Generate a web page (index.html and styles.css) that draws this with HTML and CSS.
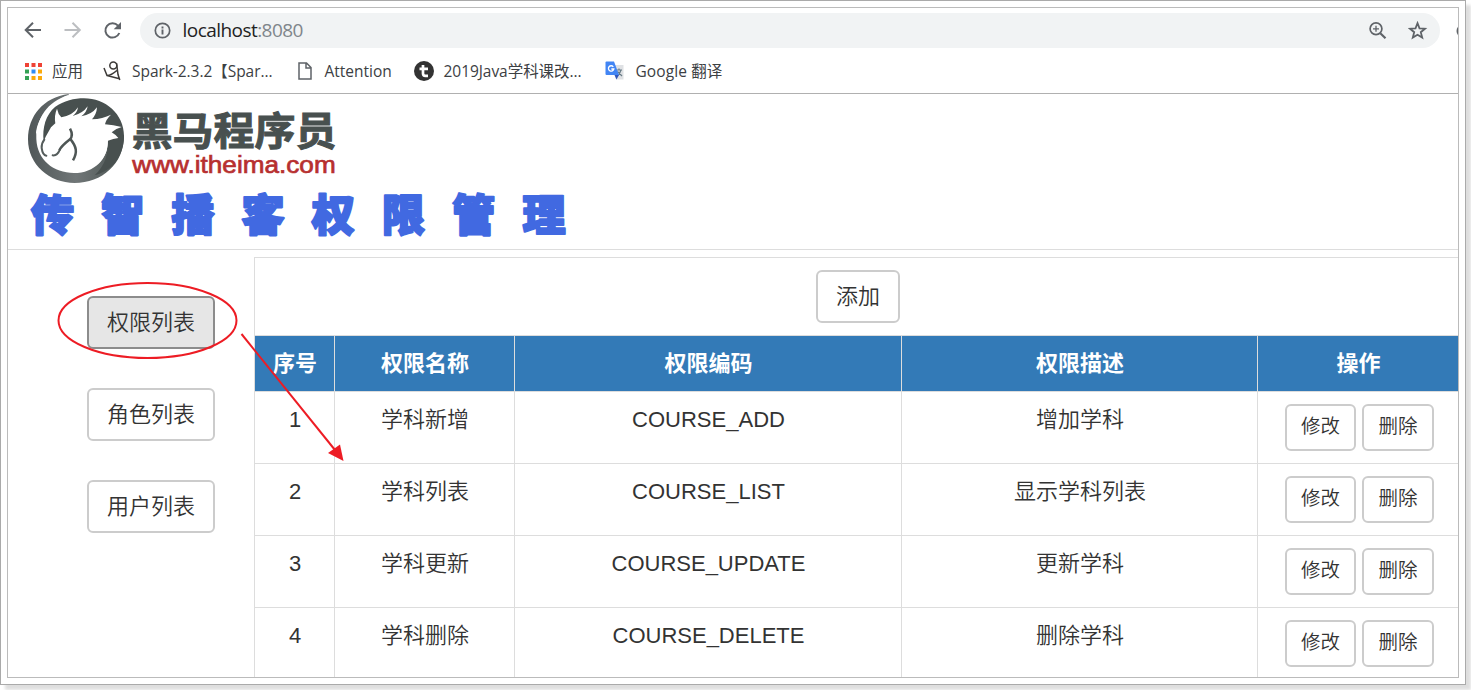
FILE: index.html
```html
<!DOCTYPE html>
<html lang="zh-CN">
<head>
<meta charset="utf-8">
<title>权限管理</title>
<link rel="stylesheet" href="styles.css">
</head>
<body>
<div class="frame">
<div class="browser">
  <div class="toolbar">
    <svg class="nav-icons" width="125" height="36" viewBox="8 13 125 36" fill="none" stroke="#5f6368" stroke-width="2">
      <path d="M41 30H26M33 22.7L25.7 30L33 37.3"/>
      <path stroke="#bcbec1" d="M64.500 30H79.500M72.500 22.700L79.800 30L72.500 37.300"/>
      <path d="M118 25.600A7.200 7.200 0 1 0 119.300 33"/>
      <path fill="#5f6368" stroke="none" d="M121 22V29.300H113.700Z"/>
    </svg>
    <div class="address">
      <svg width="18" height="18" viewBox="0 0 18 18"><circle cx="8.500" cy="8.500" r="7.200" fill="none" stroke="#5f6368" stroke-width="1.700"/><path d="M8.500 7.500v5M8.500 4.500v1.900" stroke="#5f6368" stroke-width="1.900"/></svg>
      <span class="url">localhost<span class="port">:8080</span></span>
      <svg class="zoom-icon" width="20" height="20" viewBox="0 0 20 20" fill="none" stroke="#5f6368" stroke-width="1.700"><circle cx="8" cy="7.800" r="5.900"/><path d="M12.300 12.200L17.500 17.300" stroke-width="2.200"/><path d="M5 7.800h6M8 4.800v6" stroke-width="1.300"/></svg>
      <svg width="20" height="20" viewBox="0 0 20 20" fill="none" stroke="#5f6368" stroke-width="1.800"><path d="M9.500 2.200L11.500 7.300L17 7.700L12.800 11.200L14.200 16.600L9.500 13.700L4.800 16.600L6.200 11.200L2 7.700L7.500 7.300Z"/></svg>
    </div>
    <svg class="edge-icon" width="2" height="12" viewBox="0 0 2 12"><circle cx="7" cy="6" r="6.500" fill="#5f6368"/></svg>
  </div>
  <div class="bookmarks">
    <svg class="apps" width="17" height="17" viewBox="0 0 17 17"><path fill="#ef4335" d="M0 0h4v4H0zM6.500 0h4v4h-4zM13 0h4v4h-4z"/><path fill="#34a155" d="M0 6.500h4v4H0zM0 13h4v4H0z"/><path fill="#2f8df5" d="M6.500 6.500h4v4h-4z"/><path fill="#fbaa0b" d="M13 6.500h4v4h-4zM6.500 13h4v4h-4zM13 13h4v4h-4z"/></svg>
    <span class="bm bm-apps">应用</span>
    <svg class="spark" width="18" height="20" viewBox="0 0 18 20" fill="none" stroke="#3d3a38" stroke-width="1.500"><circle cx="10.300" cy="4.500" r="3.500"/><path d="M13.500 2L15 13.500L16.800 19M1 7L4 14.500C8 14.500 11 12 13.800 9.500M4 14.500L16.500 17.800"/></svg>
    <span class="bm bm-spark">Spark-2.3.2【Spar...</span>
    <svg class="file" width="14" height="18" viewBox="0 0 14 18" fill="none" stroke="#5f6368" stroke-width="1.500"><path d="M1 1H8.500L13 5.500V17H1ZM8 1V6H13"/></svg>
    <span class="bm bm-att">Attention</span>
    <svg class="tee" width="20" height="20" viewBox="0 0 20 20"><circle cx="10" cy="10" r="10" fill="#333"/><path d="M9 4v8.500Q9 14.800 11.300 14.800H14M5.500 7.800H14" fill="none" stroke="#fff" stroke-width="2.700"/></svg>
    <span class="bm bm-java">2019Java学科课改...</span>
    <svg class="translate" width="20" height="20" viewBox="0 0 20 20"><path fill="#dfe1e4" d="M8 4H18.500V18.500H11Z"/><path d="M11 9h6M14 7.500V9M12 15Q15 13 16 9M12.500 10.500L17 15" fill="none" stroke="#687b86" stroke-width="1.200"/><path fill="#4285f4" d="M1.500 .5H9L14 14H1.500Q.5 14 .5 13V1.500Q.5 .5 1.500 .5Z"/><path fill="#3056bb" d="M9.500 14H14L11.500 18.500Z"/><path d="M8.300 5.800A2.700 2.700 0 1 0 8.800 8H6.300" fill="none" stroke="#fff" stroke-width="1.300"/></svg>
    <span class="bm bm-google">Google 翻译</span>
  </div>
  <header class="header">
    <svg class="logo" width="320" height="92" viewBox="0 6 960 276">
      <defs>
        <linearGradient id="ring" x1="0" y1="0" x2="1" y2="0"><stop offset="0" stop-color="#505758"/><stop offset=".5" stop-color="#707677"/><stop offset="1" stop-color="#4b5452"/></linearGradient>
      </defs>
      <path fill="url(#ring)" d="M134 6C58 16 12 72 12 142C12 218 76 273 152 273C234 273 300 215 300 132L250 60L60 60L36 130C36 90 66 36 134 9Z"/>
      <path fill="#fff" d="M134 9C70 28 36 80 37 142C40 204 88 243 150 243C212 243 252 200 252 146L200 80L80 100L62 120C62 90 76 60 104 36Z"/>
      <path fill="#48504f" d="M180 19C244 19 300 66 300 132C300 165 288 195 270 216C250 236 232 244 212 250C244 220 256 180 250 140L59 149C54 106 66 68 93 45C120 26 151 19 180 19Z"/>
      <path fill="#fff" d="M56 156L65 134L81 106L94 94Q90 70 99 50Q102 66 112 76Q147 70 162 46Q160 62 146 72Q176 65 191 43Q188 62 172 73Q203 68 219 46Q218 66 204 82Q236 80 261 68Q246 82 243 97Q268 99 293 105Q274 110 263 121Q275 128 283 138Q268 140 252 146Q250 212 190 232L110 225L60 188Z"/>
      <path fill="none" stroke="#555d5c" stroke-width="6" stroke-linecap="round" d="M61 143Q52 154 53 168Q56 190 67 191M86 190Q100 192 108 172"/>
      <path fill="none" stroke="#4e5655" stroke-width="7.500" stroke-linejoin="round" d="M106 175Q112 162 138 142Q149 130 138 110M138 140C158 164 161 181 147 205"/>
      <text x="323" y="160" textLength="614" lengthAdjust="spacingAndGlyphs" class="logo-cn">黑马程序员</text>
      <text x="325" y="244" textLength="610" lengthAdjust="spacingAndGlyphs" class="logo-url">www.itheima.com</text>
    </svg>
    <h1 class="title"><svg width="560" height="60" viewBox="0 0 560 60"><text x="0" y="45">传智播客权限管理</text></svg></h1>
  </header>
  <div class="content">
    <nav class="side">
      <button class="btn active">权限列表</button>
      <button class="btn">角色列表</button>
      <button class="btn">用户列表</button>
    </nav>
    <main class="main">
      <div class="add-bar"><button class="btn add">添加</button></div>
      <table class="grid">
        <colgroup><col class="c1"><col class="c2"><col class="c3"><col class="c4"><col class="c5"></colgroup>
        <thead><tr><th>序号</th><th>权限名称</th><th>权限编码</th><th>权限描述</th><th>操作</th></tr></thead>
        <tbody>
          <tr><td>1</td><td>学科新增</td><td>COURSE_ADD</td><td>增加学科</td><td><div class="ops"><button class="btn sm">修改</button><button class="btn sm del">删除</button></div></td></tr>
          <tr><td>2</td><td>学科列表</td><td>COURSE_LIST</td><td>显示学科列表</td><td><div class="ops"><button class="btn sm">修改</button><button class="btn sm del">删除</button></div></td></tr>
          <tr><td>3</td><td>学科更新</td><td>COURSE_UPDATE</td><td>更新学科</td><td><div class="ops"><button class="btn sm">修改</button><button class="btn sm del">删除</button></div></td></tr>
          <tr><td>4</td><td>学科删除</td><td>COURSE_DELETE</td><td>删除学科</td><td><div class="ops"><button class="btn sm">修改</button><button class="btn sm del">删除</button></div></td></tr>
        </tbody>
      </table>
    </main>
  </div>
</div>
</div>
<svg class="annotation" width="400" height="480" viewBox="0 0 400 480" fill="none" stroke="#ed1c24" stroke-width="2">
  <ellipse cx="147.500" cy="320.500" rx="89" ry="37.500"/>
  <path d="M241.500 334L335 450"/>
  <path fill="#ed1c24" stroke="none" d="M343.500 461L328 453L340 444.500Z"/>
</svg>
</body>
</html>
```
FILE: styles.css
```css
* { box-sizing: border-box; }
body { margin: 0; width: 1471px; height: 690px; overflow: hidden; background: #fff; color: #333; font-family: "Liberation Sans", "Noto Sans CJK SC", sans-serif; }
.frame { width: 1466px; height: 685px; padding: 6px; border: 1px solid #aaa; box-shadow: 5px 5px 3px rgba(0,0,0,.13); }
.browser { width: 1452px; height: 671px; border: 1px solid #bbb; overflow: hidden; }

.toolbar { display: flex; height: 45px; padding-top: 5px; }
.nav-icons { flex: none; margin-right: 7px; }
.address { display: flex; align-items: center; width: 1300px; height: 35px; padding: 0 12px 0 14px; border-radius: 18px; background: #f1f3f4; }
.url { margin-left: 10.500px; font: 19px/35px "Open Sans", "Noto Sans", sans-serif; letter-spacing: -.55px; color: #222; }
.port { color: #80868b; }
.zoom-icon { margin-left: auto; margin-right: 20px; }
.edge-icon { margin: 12px 0 0 auto; }

.bookmarks { display: flex; align-items: center; height: 41px; padding: 0 0 4px 16.500px; border-bottom: 1px solid #b0b0b0; }
.bookmarks svg { flex: none; }
.bm { flex: none; white-space: nowrap; font: 15.5px/24px "Open Sans", "Noto Sans CJK SC", sans-serif; color: #3c4043; }
.bm-apps { width: 51px; margin-left: 10.500px; }
.bm-spark { width: 157px; margin-left: 11px; letter-spacing: -.05px; }
.file { margin-left: 8.500px; }
.bm-att { width: 78px; margin-left: 13px; }
.tee { margin-left: 11px; }
.bm-java { width: 151px; margin-left: 10px; letter-spacing: -.05px; }
.translate { margin-left: 10.500px; }
.bm-google { margin-left: 10.500px; letter-spacing: .1px; }

.header { height: 156px; border-bottom: 1px solid #ddd; }
.logo { display: block; margin-left: 16px; }
.logo-cn { font: bold 116px "Noto Sans CJK SC", sans-serif; fill: #48504f; stroke: #48504f; stroke-width: 3px; }
.logo-url { font: 70px "Liberation Sans", sans-serif; fill: #b72f2f; stroke: #b72f2f; stroke-width: 2px; }
.title { height: 60px; margin: 0 0 0 23px; }
.title svg { display: block; overflow: visible; }
.title text { font: 900 43px "Noto Sans CJK SC", sans-serif; letter-spacing: 27.200px; fill: #4169e1; stroke: #4169e1; stroke-width: 2.200px; stroke-linejoin: round; }

.content { display: flex; padding-top: 7px; }
.side { display: flex; flex-direction: column; gap: 39px; width: 246px; padding: 39px 0 0 79px; }
.btn { display: block; width: 128px; height: 53px; padding: 0; border: 2px solid #ccc; border-radius: 6px; background: #fff; color: #333; font: 350 22px/49px "Liberation Sans", "Noto Sans CJK SC", sans-serif; text-align: center; }
.btn.active { background: #e6e6e6; border-color: #8c8c8c; }
.main { width: 1204px; }
.add-bar { height: 78px; padding: 12px 0 0 561px; border: solid #ddd; border-width: 1px 0 0 1px; }
.btn.add { width: 84px; }
.grid { width: 1204px; table-layout: fixed; border-collapse: separate; border-spacing: 0; font-size: 22px; font-weight: 350; }
.c1 { width: 80px; } .c2 { width: 180px; } .c3 { width: 387px; } .c4 { width: 356px; } .c5 { width: 201px; }
.grid th, .grid td { padding: 12px 0 0 1px; border: solid #ddd; border-width: 1px 0 0 1px; text-align: center; vertical-align: top; line-height: 32px; }
.grid th { height: 56px; background: #337ab7; color: #fff; font-weight: bold; }
.grid td { height: 72px; }
.ops { display: flex; padding-left: 26px; gap: 6px; }
.btn.sm { width: 71px; height: 47px; padding-bottom: 3px; font-size: 19.500px; line-height: 40px; }
.btn.del { width: 72px; }

.annotation { position: absolute; left: 0; top: 0; pointer-events: none; }
```
